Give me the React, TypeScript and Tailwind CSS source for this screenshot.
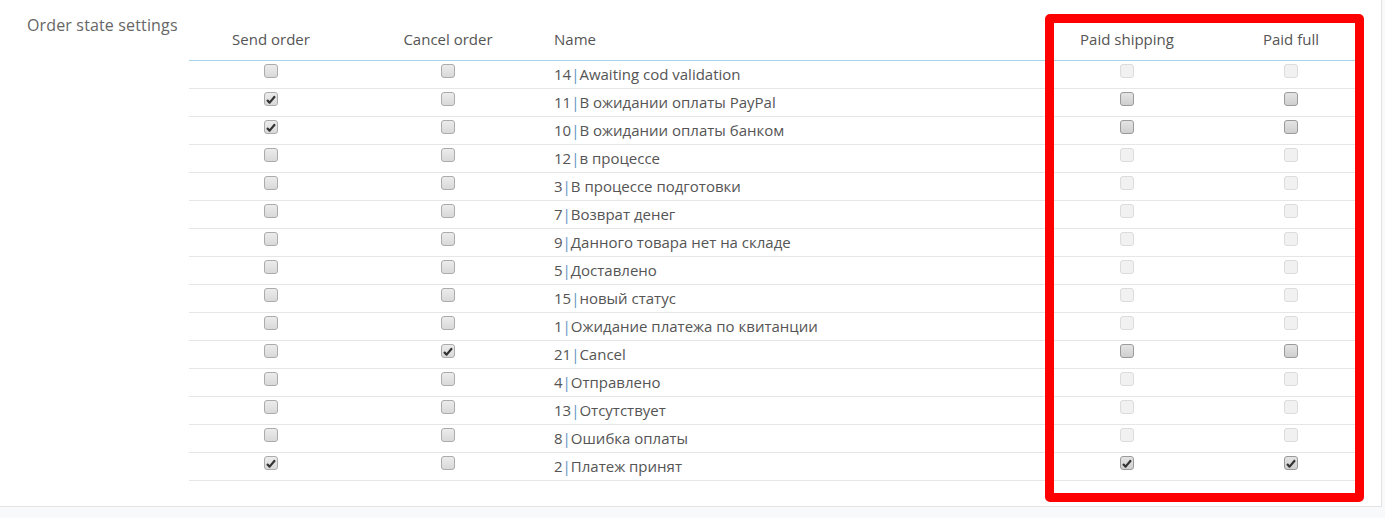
import React from 'react';

type Paid = 'disabled' | 'off' | 'on';

interface OrderState {
  id: number;
  name: string;
  send: boolean;
  cancel: boolean;
  paid: Paid;
}

const STATES: OrderState[] = [
  { id: 14, name: 'Awaiting cod validation', send: false, cancel: false, paid: 'disabled' },
  { id: 11, name: 'В ожидании оплаты PayPal', send: true, cancel: false, paid: 'off' },
  { id: 10, name: 'В ожидании оплаты банком', send: true, cancel: false, paid: 'off' },
  { id: 12, name: 'в процессе', send: false, cancel: false, paid: 'disabled' },
  { id: 3, name: 'В процессе подготовки', send: false, cancel: false, paid: 'disabled' },
  { id: 7, name: 'Возврат денег', send: false, cancel: false, paid: 'disabled' },
  { id: 9, name: 'Данного товара нет на складе', send: false, cancel: false, paid: 'disabled' },
  { id: 5, name: 'Доставлено', send: false, cancel: false, paid: 'disabled' },
  { id: 15, name: 'новый статус', send: false, cancel: false, paid: 'disabled' },
  { id: 1, name: 'Ожидание платежа по квитанции', send: false, cancel: false, paid: 'disabled' },
  { id: 21, name: 'Cancel', send: false, cancel: true, paid: 'off' },
  { id: 4, name: 'Отправлено', send: false, cancel: false, paid: 'disabled' },
  { id: 13, name: 'Отсутствует', send: false, cancel: false, paid: 'disabled' },
  { id: 8, name: 'Ошибка оплаты', send: false, cancel: false, paid: 'disabled' },
  { id: 2, name: 'Платеж принят', send: true, cancel: false, paid: 'on' },
];

function Checkbox({ checked, disabled, dark }: { checked?: boolean; disabled?: boolean; dark?: boolean }) {
  const box = disabled
    ? 'border-[#dcdcdc] bg-[#f1f1f1]'
    : dark
      ? 'border-[#9a9a9a] bg-gradient-to-b from-[#e4e4e4] to-[#cfcfcf]'
      : 'border-[#ababab] bg-gradient-to-b from-[#ececec] to-[#d9d9d9]';

  return (
    <span className={`relative mb-[7px] flex h-[14px] w-[14px] items-center justify-center rounded-[3px] border ${box}`}>
      {checked && (
        <svg width="10" height="9" viewBox="0 0 10 9">
          <path d="M1 5 L3.6 7.6 L9 1.2" fill="none" stroke="#333" strokeWidth="2.2" strokeLinejoin="round" />
        </svg>
      )}
    </span>
  );
}

export default function App() {
  const font = { fontFamily: '"Open Sans", "Noto Sans", sans-serif' };

  return (
    <div className="h-[518px] w-[1385px] overflow-hidden bg-[#f8f9fb]" style={font}>
      <div className="relative flex h-[507px] w-[1382px] border-r border-b border-[#e3e3e3] bg-white">
        <div className="w-[189px] shrink-0 pt-[14px] pl-[27px] text-[16px] leading-[22px] tracking-[0.15px] text-[#666]">
          Order state settings
        </div>

        <div className="w-[1167px] text-[15px] text-[#555]">
          <div className="grid h-[61px] grid-cols-[164px_190px_1fr_180px_130px] items-end border-b border-[#a4d4e9] pb-[11px] leading-[20px]">
            <div className="text-center">Send order</div>
            <div className="text-center">Cancel order</div>
            <div className="pl-[11px]">Name</div>
            <div className="pr-[18px] text-center">Paid shipping</div>
            <div className="text-center">Paid full</div>
          </div>

          {STATES.map((s) => (
            <div
              key={s.id}
              className="grid h-[28px] grid-cols-[164px_190px_1fr_180px_130px] items-center border-b border-[#e6e6e6]"
            >
              <div className="flex justify-center">
                <Checkbox checked={s.send} />
              </div>
              <div className="flex justify-center">
                <Checkbox checked={s.cancel} />
              </div>
              <div className="pb-[2px] pl-[11px] leading-[20px]">
                {s.id}
                <span className="text-[#5b93c4]">|</span>
                {s.name}
              </div>
              <div className="flex justify-center pr-[18px]">
                <Checkbox checked={s.paid === 'on'} disabled={s.paid === 'disabled'} dark />
              </div>
              <div className="flex justify-center">
                <Checkbox checked={s.paid === 'on'} disabled={s.paid === 'disabled'} dark />
              </div>
            </div>
          ))}
        </div>

        <div className="pointer-events-none absolute top-[14px] left-[1045px] h-[488px] w-[319px] rounded-[5px] border-[9px] border-[#ff0000]" />
      </div>
    </div>
  );
}
